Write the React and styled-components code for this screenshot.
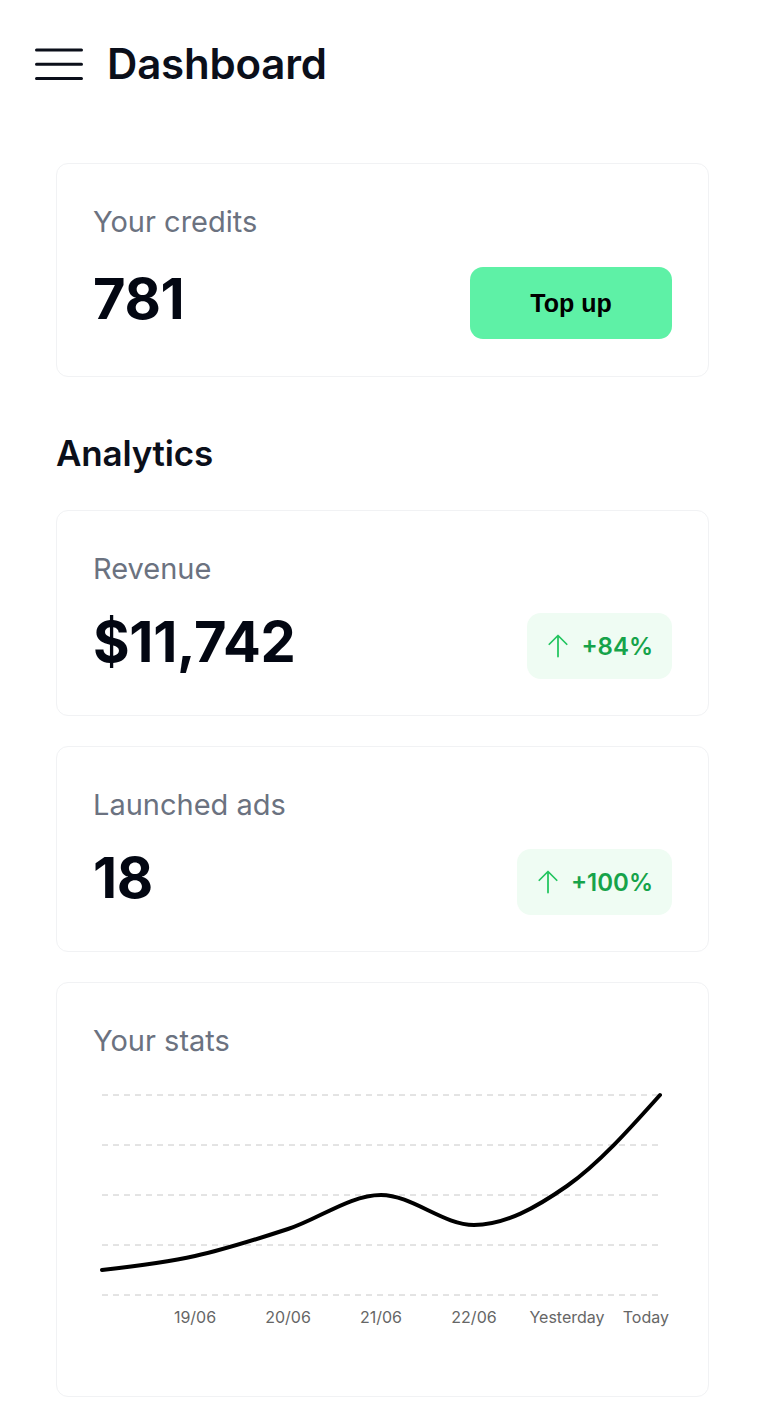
import React from "react";
import styled, { createGlobalStyle } from "styled-components";

const GlobalStyle = createGlobalStyle`
  html, body { margin: 0; padding: 0; background: #ffffff; }
  body { font-family: Inter, "Noto Sans", sans-serif; color: #030712; }
  * { box-sizing: border-box; }
`;

const Page = styled.div`
  width: 765px;
  min-height: 1414px;
  background: #ffffff;
`;

const Header = styled.header`
  height: 128px;
  display: flex;
  align-items: center;
  gap: 24px;
  padding: 0 35px;
`;

const MenuButton = styled.button`
  border: 0;
  background: none;
  padding: 0;
  width: 48px;
  height: 34px;
  display: flex;
  align-items: center;
  justify-content: center;
  color: #0b0f1a;
  cursor: pointer;
`;

const Title = styled.h1`
  margin: 0;
  font-family: Inter, sans-serif;
  font-size: 42px;
  line-height: 1.2;
  font-weight: 600;
  color: #0b0f1a;
  letter-spacing: -0.2px;
`;

const Main = styled.main`
  padding: 35px 56px 18px;
  display: flex;
  flex-direction: column;
`;

const Card = styled.section`
  border: 1px solid #f1f2f4;
  border-radius: 12px;
  background: #fff;
  padding: 36px;
  display: flex;
  flex-direction: column;
  margin-bottom: ${(p) => p.$mb ?? 30}px;
`;

const Label = styled.div`
  font-size: 29px;
  line-height: 44px;
  font-weight: 400;
  color: #6b7280;
  margin-bottom: 22px;
`;

const Row = styled.div`
  display: flex;
  align-items: center;
  justify-content: space-between;
  min-height: ${(p) => p.$h || 66}px;
`;

const Value = styled.div`
  font-size: 56px;
  line-height: 1;
  font-weight: 700;
  color: #030712;
  padding-bottom: 8px;
  letter-spacing: -0.3px;
`;

const TopUp = styled.button`
  width: 202px;
  height: 72px;
  border: 0;
  border-radius: 13px;
  background: #5ef1a6;
  color: #000;
  font-family: "Liberation Sans", Arial, sans-serif;
  font-weight: 700;
  font-size: 25px;
  cursor: pointer;
`;

const SectionTitle = styled.h2`
  margin: 55px 0 36px;
  font-size: 35px;
  line-height: 1.2;
  font-weight: 600;
  color: #0b0f1a;
  letter-spacing: -0.2px;
`;

const Badge = styled.div`
  height: 66px;
  display: flex;
  align-items: center;
  gap: 9px;
  padding: 0 19px 0 17px;
  border-radius: 14px;
  background: #effcf3;
  color: #16a34a;
  font-size: 24px;
  font-weight: 600;
  svg { color: #22c55e; }
`;

const ChartSvg = styled.svg`
  display: block;
  width: 579px;
  height: 275px;
  overflow: visible;
`;

const TickText = styled.text`
  font-family: Inter, sans-serif;
  font-size: 16px;
  fill: #666;
`;

function MenuIcon() {
  return (
    <svg width="48" height="34" viewBox="0 0 48 34" fill="none">
      <path d="M1.5 3H46.5M1.5 17.3H46.5M1.5 31.6H46.5" stroke="currentColor" strokeWidth="3" strokeLinecap="round" />
    </svg>
  );
}

function ArrowUp() {
  return (
    <svg width="28" height="28" viewBox="0 0 24 24" fill="none" stroke="currentColor" strokeWidth="1.5" strokeLinecap="round" strokeLinejoin="round">
      <path d="M4.5 10.5 12 3m0 0 7.5 7.5M12 3v18" />
    </svg>
  );
}

function monotonePath(pts) {
  const n = pts.length;
  const sign = (v) => (v < 0 ? -1 : 1);
  const t = new Array(n).fill(0);
  for (let i = 1; i < n - 1; i++) {
    const [x0, y0] = pts[i - 1];
    const [x1, y1] = pts[i];
    const [x2, y2] = pts[i + 1];
    const h0 = x1 - x0, h1 = x2 - x1;
    const s0 = (y1 - y0) / h0, s1 = (y2 - y1) / h1;
    const p = (s0 * h1 + s1 * h0) / (h0 + h1);
    t[i] = (sign(s0) + sign(s1)) * Math.min(Math.abs(s0), Math.abs(s1), 0.5 * Math.abs(p)) || 0;
  }
  const h = pts[1][0] - pts[0][0];
  t[0] = (3 * (pts[1][1] - pts[0][1]) / h - t[1]) / 2;
  const hl = pts[n - 1][0] - pts[n - 2][0];
  t[n - 1] = (3 * (pts[n - 1][1] - pts[n - 2][1]) / hl - t[n - 2]) / 2;
  let d = `M${pts[0][0]},${pts[0][1]}`;
  for (let i = 0; i < n - 1; i++) {
    const [x0, y0] = pts[i];
    const [x1, y1] = pts[i + 1];
    const dx = (x1 - x0) / 3;
    d += ` C${x0 + dx},${y0 + dx * t[i]} ${x1 - dx},${y1 - dx * t[i + 1]} ${x1},${y1}`;
  }
  return d;
}

const data = [
  { label: "", y: 185 },
  { label: "19/06", y: 171 },
  { label: "20/06", y: 144 },
  { label: "21/06", y: 110 },
  { label: "22/06", y: 140 },
  { label: "Yesterday", y: 101 },
  { label: "Today", y: 10 },
];

function StatsChart() {
  const x0 = 9;
  const step = 93;
  const pts = data.map((d, i) => [x0 + i * step, d.y]);
  const gridYs = [10, 60, 110, 160, 210];
  const xEnd = x0 + step * (data.length - 1);
  return (
    <ChartSvg viewBox="0 0 579 275">
      {gridYs.map((gy) => (
        <line key={gy} x1={x0} x2={xEnd} y1={gy} y2={gy} stroke="#c8c8c8" strokeWidth="1" strokeDasharray="6 5" />
      ))}
      <path d={monotonePath(pts)} fill="none" stroke="#000" strokeWidth="4" strokeLinecap="round" />
      {data.map((d, i) =>
        d.label ? (
          <TickText
            key={d.label}
            x={i === data.length - 1 ? 576 : pts[i][0]}
            y={238}
            textAnchor={i === data.length - 1 ? "end" : "middle"}
          >
            {d.label}
          </TickText>
        ) : null
      )}
    </ChartSvg>
  );
}

export default function App() {
  return (
    <Page>
      <GlobalStyle />
      <Header>
        <MenuButton aria-label="Menu">
          <MenuIcon />
        </MenuButton>
        <Title>Dashboard</Title>
      </Header>
      <Main>
        <Card $mb={0}>
          <Label>Your credits</Label>
          <Row $h={74}>
            <Value>781</Value>
            <TopUp>Top up</TopUp>
          </Row>
        </Card>
        <SectionTitle>Analytics</SectionTitle>
        <Card>
          <Label>Revenue</Label>
          <Row>
            <Value>$11,742</Value>
            <Badge>
              <ArrowUp />
              <span>+84%</span>
            </Badge>
          </Row>
        </Card>
        <Card>
          <Label>Launched ads</Label>
          <Row>
            <Value>18</Value>
            <Badge>
              <ArrowUp />
              <span>+100%</span>
            </Badge>
          </Row>
        </Card>
        <Card $mb={0}>
          <Label>Your stats</Label>
          <StatsChart />
        </Card>
      </Main>
    </Page>
  );
}
